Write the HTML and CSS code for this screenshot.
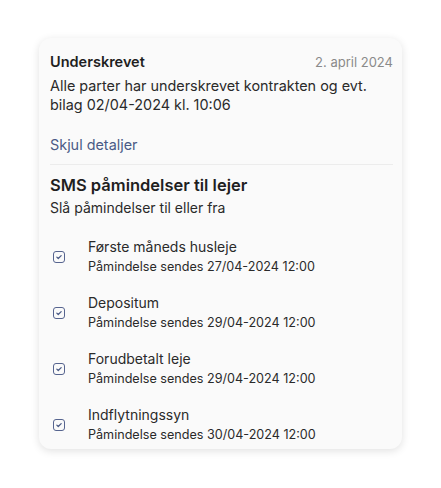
FILE: index.html
```html
<!DOCTYPE html>
<html lang="da">
<head>
    <meta charset="UTF-8">
    <meta name="viewport" content="width=device-width, initial-scale=1.0">
    <title>Underskrevet</title>
    <link rel="stylesheet" href="styles.css">
</head>
<body>
    <div class="card">
        <div class="event">
            <div class="event-head">
                <span class="event-title">Underskrevet</span>
                <span class="event-date">2. april 2024</span>
            </div>
            <p class="event-text">Alle parter har underskrevet kontrakten og evt. bilag 02/04-2024 kl. 10:06</p>
            <a class="toggle" href="#">Skjul detaljer</a>
        </div>

        <div class="reminders">
            <h3>SMS påmindelser til lejer</h3>
            <p class="sub">Slå påmindelser til eller fra</p>

            <ul class="list">
                <li class="item">
                    <span class="check"><svg viewBox="0 0 12 12"><path d="M3.4 6.2 5.1 7.8 8.6 4.3"/></svg></span>
                    <div>
                        <div class="item-title">Første måneds husleje</div>
                        <div class="item-sub">Påmindelse sendes 27/04-2024 12:00</div>
                    </div>
                </li>
                <li class="item">
                    <span class="check"><svg viewBox="0 0 12 12"><path d="M3.4 6.2 5.1 7.8 8.6 4.3"/></svg></span>
                    <div>
                        <div class="item-title">Depositum</div>
                        <div class="item-sub">Påmindelse sendes 29/04-2024 12:00</div>
                    </div>
                </li>
                <li class="item">
                    <span class="check"><svg viewBox="0 0 12 12"><path d="M3.4 6.2 5.1 7.8 8.6 4.3"/></svg></span>
                    <div>
                        <div class="item-title">Forudbetalt leje</div>
                        <div class="item-sub">Påmindelse sendes 29/04-2024 12:00</div>
                    </div>
                </li>
                <li class="item">
                    <span class="check"><svg viewBox="0 0 12 12"><path d="M3.4 6.2 5.1 7.8 8.6 4.3"/></svg></span>
                    <div>
                        <div class="item-title">Indflytningssyn</div>
                        <div class="item-sub">Påmindelse sendes 30/04-2024 12:00</div>
                    </div>
                </li>
            </ul>
        </div>
    </div>
</body>
</html>
```

FILE: styles.css
```css
* { margin: 0; padding: 0; box-sizing: border-box; }
body {
    font-family: 'Inter', 'Liberation Sans', sans-serif;
    background: #ffffff;
    color: #262626;
    padding: 38px 39px;
}
.card {
    width: 363px;
    background: #fafafa;
    border-radius: 12px;
    box-shadow: 0 2px 8px rgba(0,0,0,0.12);
    padding: 15px 9px 0 11px;
}
.event { padding-bottom: 10px; border-bottom: 1px solid #ececec; }
.event-head { display: flex; justify-content: space-between; align-items: baseline; }
.event-title { font-size: 14.5px; font-weight: 600; color: #1f1f1f; }
.event-date { font-size: 13px; color: #8a8a8a; }
.event-text { font-size: 14.4px; line-height: 19px; margin-top: 6px; color: #2a2a2a; }
.toggle {
    display: inline-block;
    margin-top: 22px;
    font-size: 14.4px;
    color: #4a5a86;
    text-decoration: none;
}
.reminders { padding-top: 9px; }
.reminders h3 { font-size: 16.5px; font-weight: 600; color: #1f1f1f; line-height: 22px; }
.sub { font-size: 14px; line-height: 20px; color: #2a2a2a; margin-top: 2px; }
.list { list-style: none; margin-top: 11px; }
.item { display: flex; align-items: center; gap: 23px; padding: 8px 0 8px 3px; }
.item:last-child { padding-bottom: 4px; }
.check {
    width: 12px;
    height: 12px;
    border: 1.8px solid #56648f;
    border-radius: 3px;
    flex-shrink: 0;
    display: flex;
}
.check svg { width: 100%; height: 100%; fill: none; stroke: #4a5a86; stroke-width: 1.5; stroke-linecap: round; stroke-linejoin: round; }
.item-title { font-size: 14px; line-height: 20px; color: #2a2a2a; }
.item-sub { font-size: 12.6px; font-weight: 400; line-height: 20px; color: #2a2a2a; }
```
